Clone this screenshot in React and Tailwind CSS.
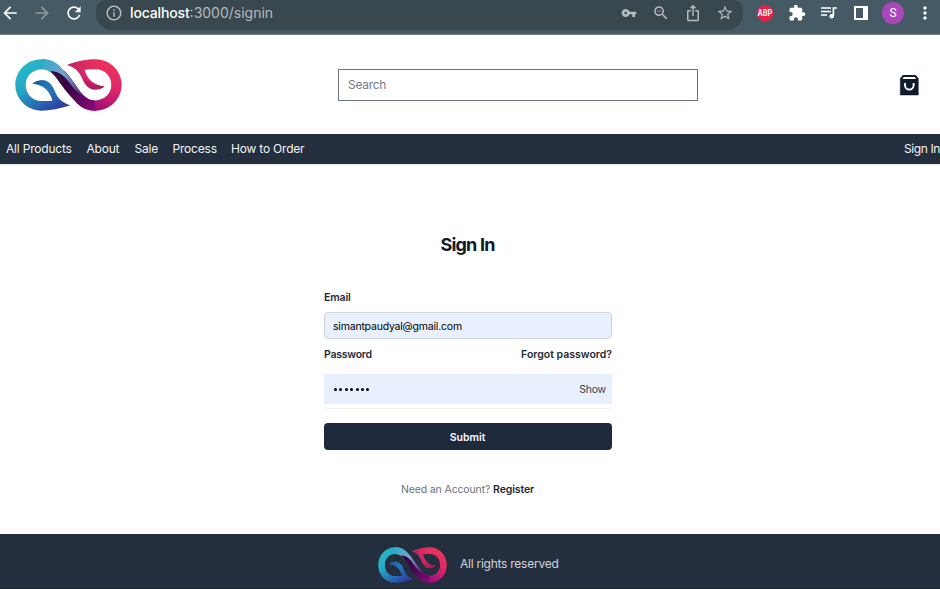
import React from "react";

const leftPath =
  "M212 180 C180 190 150 196 125 196 C82 196 47 161 47 118 C47 76 82 41 125 41 C150 41 166 48 182 64 L188 120 L183 116 C165 89 150 72 127 71 C98 71 78 92 78 118 C78 145 98 167 125 167 C138 167 148 167 158 165 C149 134 130 119 98 114 C107 107 118 103 131 104 C151 107 160 124 167 142 C176 162 190 173 212 180 Z";
const rightPath =
  "M202 58 C234 46 264 41 287 41 C330 41 365 76 365 118 C365 161 330 196 287 196 C262 196 246 188 230 172 L222 112 L228 120 C246 148 262 165 285 165 C314 165 334 144 334 118 C334 91 314 71 287 71 C274 71 264 71 254 73 C263 103 282 118 314 123 C305 130 294 133 281 132 C262 129 252 112 245 94 C236 75 222 64 202 58 Z";
const bandPath =
  "M150 77 C170 74 184 74 192 74 C205 87 216 102 228 120 C246 148 262 165 285 165 L287 196 C262 196 246 188 230 172 C212 154 199 138 184 117 C171 97 161 84 150 77 Z";
const sheenPath =
  "M125 41 C150 41 166 48 182 64 C200 82 214 100 228 120 C237 134 245 145 254 153 C232 144 218 124 203 104 C186 82 168 76 150 77 C142 73 135 71 125 71 Z";

function Logo({ id, className }) {
  return (
    <svg className={className} viewBox="46 40 320 157" preserveAspectRatio="none">
      <defs>
        <linearGradient id={id + "blue"} x1="70" y1="50" x2="170" y2="195" gradientUnits="userSpaceOnUse">
          <stop offset="0" stopColor="#25b9c9" />
          <stop offset=".4" stopColor="#27a5c5" />
          <stop offset=".75" stopColor="#2867b4" />
          <stop offset="1" stopColor="#303b9b" />
        </linearGradient>
        <linearGradient id={id + "pink"} x1="320" y1="50" x2="250" y2="195" gradientUnits="userSpaceOnUse">
          <stop offset="0" stopColor="#ee315c" />
          <stop offset=".4" stopColor="#dc2868" />
          <stop offset="1" stopColor="#8b087c" />
        </linearGradient>
        <linearGradient id={id + "tip"} x1="200" y1="60" x2="290" y2="60" gradientUnits="userSpaceOnUse">
          <stop offset="0" stopColor="#a81b62" stopOpacity=".75" />
          <stop offset="1" stopColor="#e02c60" stopOpacity="0" />
        </linearGradient>
        <linearGradient id={id + "band"} x1="175" y1="75" x2="285" y2="190" gradientUnits="userSpaceOnUse">
          <stop offset="0" stopColor="#330a3b" />
          <stop offset=".4" stopColor="#3d0648" />
          <stop offset="1" stopColor="#8b087c" />
        </linearGradient>
        <linearGradient id={id + "light"} x1="125" y1="50" x2="235" y2="145" gradientUnits="userSpaceOnUse">
          <stop offset="0" stopColor="#2fadc7" />
          <stop offset=".5" stopColor="#76a3cf" />
          <stop offset="1" stopColor="#583f8b" />
        </linearGradient>
        <linearGradient id={id + "leafl"} x1="98" y1="110" x2="168" y2="155" gradientUnits="userSpaceOnUse">
          <stop offset="0" stopColor="#184b91" />
          <stop offset="1" stopColor="#2866b4" stopOpacity="0" />
        </linearGradient>
        <linearGradient id={id + "leafr"} x1="314" y1="125" x2="245" y2="80" gradientUnits="userSpaceOnUse">
          <stop offset="0" stopColor="#9c174c" />
          <stop offset="1" stopColor="#b82060" stopOpacity="0" />
        </linearGradient>
      </defs>
      <path d={rightPath} fill={"url(#" + id + "pink)"} />
      <path d="M202 58 C234 46 264 41 287 41 L287 71 C274 71 264 71 254 73 L256 81 L245 94 C236 75 222 64 202 58 Z" fill={"url(#" + id + "tip)"} />
      <path d={leftPath} fill={"url(#" + id + "blue)"} />
      <path d={bandPath} fill={"url(#" + id + "band)"} />
      <path d={sheenPath} fill={"url(#" + id + "light)"} />
      <path d="M98 114 C107 107 118 103 131 104 C151 107 160 124 167 142 L172 152 C156 141 144 120 98 114 Z" fill={"url(#" + id + "leafl)"} />
      <path d="M314 123 C305 130 294 133 281 132 C262 129 252 112 245 94 L240 85 C258 98 270 117 314 123 Z" fill={"url(#" + id + "leafr)"} />
    </svg>
  );
}

function Glyph({ d, className }) {
  return (
    <svg viewBox="0 0 24 24" fill="currentColor" className={className}>
      <path d={d} />
    </svg>
  );
}

function BrowserBar() {
  return (
    <div className="flex h-[35px] shrink-0 items-start border-b border-[#71838b] bg-[#455a64] text-white">
      <Glyph className="mt-[3px] size-5 shrink-0" d="M20 11H7.83l5.59-5.59L12 4l-8 8 8 8 1.41-1.41L7.83 13H20v-2z" />
      <Glyph className="mt-[3px] ml-3 size-5 shrink-0 text-[#8c989d]" d="M12 4l-1.41 1.41L16.17 11H4v2h12.17l-5.58 5.59L12 20l8-8z" />
      <Glyph className="mt-[3px] ml-3 size-5 shrink-0" d="M17.65 6.35C16.2 4.9 14.21 4 12 4c-4.42 0-7.99 3.58-7.99 8s3.57 8 7.99 8c3.73 0 6.84-2.55 7.73-6h-2.08c-.82 2.33-3.04 4-5.65 4-3.31 0-6-2.69-6-6s2.69-6 6-6c1.66 0 3.14.69 4.22 1.78L13 11h7V4l-2.35 2.35z" />
      <div className="ml-3 flex h-[30px] w-[647px] shrink-0 items-start rounded-b-[16px] rounded-tl-[10px] rounded-tr-[10px] bg-[#39474e] pl-[9px] text-[#b5bbbe]">
        <Glyph className="mt-[4px] size-[18px]" d="M11 7h2v2h-2zm0 4h2v6h-2zm1-9C6.48 2 2 6.48 2 12s4.48 10 10 10 10-4.48 10-10S17.52 2 12 2zm0 18c-4.41 0-8-3.59-8-8s3.59-8 8-8 8 3.59 8 8-3.59 8-8 8z" />
        <span className="mt-[3px] ml-[7px] text-[14px] leading-5">
          <span className="font-medium tracking-[-0.01em] text-white">localhost</span>:3000/signin
        </span>
        <div className="ml-auto flex pr-[9px]">
          <Glyph className="mt-[5px] mr-[15px] size-4" d="M12.65 10C11.83 7.67 9.61 6 7 6c-3.31 0-6 2.69-6 6s2.69 6 6 6c2.61 0 4.83-1.67 5.65-4H17v4h4v-4h2v-4H12.65zM7 14c-1.1 0-2-.9-2-2s.9-2 2-2 2 .9 2 2-.9 2-2 2z" />
          <Glyph className="mt-[4px] mr-[14px] size-[18px]" d="M15.5 14h-.79l-.28-.27C15.41 12.59 16 11.11 16 9.5 16 5.91 13.09 3 9.5 3S3 5.91 3 9.5 5.91 16 9.5 16c1.61 0 3.09-.59 4.23-1.57l.27.28v.79l5 4.99L20.49 19l-4.99-5zm-6 0C7.01 14 5 11.99 5 9.5S7.01 5 9.5 5 14 7.01 14 9.5 11.99 14 9.5 14zM7 9h5v1H7z" />
          <Glyph className="mt-[4px] mr-[14px] size-[18px]" d="M16 5l-1.42 1.42-1.59-1.59V16h-1.98V4.83L9.42 6.42 8 5l4-4 4 4zm4 5v11c0 1.1-.9 2-2 2H6c-1.11 0-2-.9-2-2V10c0-1.11.89-2 2-2h3v2H6v11h12V10h-3V8h3c1.1 0 2 .89 2 2z" />
          <Glyph className="mt-[4px] size-[18px]" d="M22 9.24l-7.19-.62L12 2 9.19 8.63 2 9.24l5.46 4.73L5.82 21 12 17.27 18.18 21l-1.63-7.03L22 9.24zM12 15.4l-3.76 2.27 1-4.28-3.32-2.88 4.38-.38L12 6.1l1.71 4.04 4.38.38-3.32 2.88 1 4.28L12 15.4z" />
        </div>
      </div>
      <svg viewBox="0 0 16 16" className="mt-[5px] ml-[14px] size-4 shrink-0">
        <path d="M5 0h6l5 5v6l-5 5H5l-5-5V5z" fill="#ed1e45" />
        <text x="8" y="11" textAnchor="middle" textLength="14.4" lengthAdjust="spacingAndGlyphs" fill="#fff" fontFamily="Roboto, sans-serif" fontWeight="700" fontSize="8.5">ABP</text>
      </svg>
      <Glyph className="mt-[4px] ml-[15px] size-[18px] shrink-0" d="M20.5 11H19V7c0-1.1-.9-2-2-2h-4V3.5C13 2.12 11.88 1 10.5 1S8 2.12 8 3.5V5H4c-1.1 0-1.99.9-1.99 2v3.8H3.5c1.49 0 2.7 1.21 2.7 2.7s-1.21 2.7-2.7 2.7H2V20c0 1.1.9 2 2 2h3.8v-1.5c0-1.49 1.21-2.7 2.7-2.7 1.49 0 2.7 1.21 2.7 2.7V22H17c1.1 0 2-.9 2-2v-4h1.5c1.38 0 2.5-1.12 2.5-2.5S21.88 11 20.5 11z" />
      <svg viewBox="0 0 18 14" fill="none" stroke="currentColor" strokeWidth="1.7" className="mt-[6px] ml-[14px] h-[14px] w-[18px] shrink-0">
        <path d="M1 2h10M1 5.5h10M1 9h6" />
        <path d="M13.4 10V2H17" />
        <circle cx="11.7" cy="10.2" r="2.2" fill="currentColor" stroke="none" />
      </svg>
      <div className="mt-[6px] ml-4 h-[14px] w-[14px] shrink-0 border-y-2 border-r-[5px] border-l-2 border-white" />
      <div className="mt-[2px] ml-[14px] flex size-[22px] shrink-0 items-center justify-center rounded-full bg-[#ab47bc] font-[Roboto] text-[12px]">S</div>
      <Glyph className="mt-[3px] ml-[11px] size-5 shrink-0" d="M12 8c1.1 0 2-.9 2-2s-.9-2-2-2-2 .9-2 2 .9 2 2 2zm0 2c-1.1 0-2 .9-2 2s.9 2 2 2 2-.9 2-2-.9-2-2-2zm0 6c-1.1 0-2 .9-2 2s.9 2 2 2 2-.9 2-2-.9-2-2-2z" />
    </div>
  );
}

function Header() {
  return (
    <header className="flex h-[99px] shrink-0 items-start">
      <Logo id="top" className="mt-[24px] ml-[15px] h-[52px] w-[107px] shrink-0" />
      <div className="mt-[34px] ml-[216px] flex h-8 w-[360px] shrink-0 items-center border border-[#6b7280] pl-[9px] text-[12px] tracking-[-0.3px] text-[#747b88]">
        Search
      </div>
      <svg viewBox="0 0 20 21" className="mt-[40px] ml-[201px] h-[21px] w-5 shrink-0">
        <path d="M4.2 0h12.2L19.3 3.4V20H1.3V3.4z" fill="#111b2b" stroke="#111b2b" strokeWidth=".5" strokeLinejoin="round" />
        <path d="M4.8 2h11l1.3 2H3.5z" fill="#fff" />
        <path d="M6 8v2.2a4.3 4.3 0 0 0 8.6 0V8" fill="none" stroke="#fff" strokeWidth="1.9" />
      </svg>
    </header>
  );
}

function Navigation() {
  return (
    <nav className="flex h-[30px] shrink-0 items-center bg-[#232f3e] pl-1.5 text-[12px] tracking-[-0.2px] whitespace-nowrap text-[#f3f4f6]">
      <span className="w-[80.5px]">All Products</span>
      <span className="w-[48px]">About</span>
      <span className="w-[38px]">Sale</span>
      <span className="w-[58.5px]">Process</span>
      <span>How to Order</span>
      <span className="ml-auto w-9 shrink-0 tracking-[-0.4px]">Sign In</span>
    </nav>
  );
}

function SignIn() {
  return (
    <main className="h-[370px] shrink-0 border-t border-[#e5e7eb] text-[10.5px] text-[#1f2937]">
      <div className="ml-[324px] flex w-72 flex-col">
        <h1 className="mt-[66px] pr-[1px] text-center text-[18px] leading-7 font-bold tracking-[-0.045em] text-[#111827]">Sign In</h1>
        <label className="mt-[31px] text-[10.5px] leading-4 font-semibold tracking-[-0.15px]">Email</label>
        <div className="mt-[6px] flex h-[27px] items-center rounded border border-[#d1d5db] bg-[#e8f0fe] pt-[2px] pl-2 tracking-[-0.2px] text-black">simantpaudyal@gmail.com</div>
        <div className="mt-[8px] flex justify-between leading-4">
          <span className="font-semibold tracking-[-0.25px]">Password</span>
          <span className="font-semibold">Forgot password?</span>
        </div>
        <div className="mt-[11px] h-[35px] rounded-b border-b border-[#f0f1f3]">
          <div className="flex h-[30px] items-center justify-between bg-[#e8f0fe] pr-[6px] pl-[10px]">
            <div className="flex gap-[2.4px]">
              {[0, 1, 2, 3, 4, 5, 6].map((n) => (
                <i key={n} className="size-[3px] rounded-full bg-black" />
              ))}
            </div>
            <span className="pt-[2px] tracking-[-0.2px] text-[#374151]">Show</span>
          </div>
        </div>
        <button className="mt-[14px] h-[27px] rounded bg-[#1e293b] pt-[2px] pr-[1px] font-semibold text-[#f9fafb]">Submit</button>
        <p className="mt-[32px] pr-[1px] text-center leading-4 tracking-[-0.13px] text-[#6b7280]">
          Need an Account? <span className="font-semibold text-[#1f2937]">Register</span>
        </p>
      </div>
    </main>
  );
}

export default function App() {
  return (
    <div className="flex h-[589px] w-[940px] flex-col overflow-hidden bg-white font-[Inter,sans-serif]">
      <BrowserBar />
      <Header />
      <Navigation />
      <SignIn />
      <footer className="flex h-[55px] shrink-0 items-start border-b border-[#1a2430] bg-[#232f3e] text-[12px] tracking-[-0.25px] text-[#d1d5db]">
        <Logo id="bottom" className="mt-[13px] ml-[378px] h-9 w-[69px] shrink-0" />
        <span className="mt-[21px] ml-[13px] leading-[18px]">All rights reserved</span>
      </footer>
    </div>
  );
}
